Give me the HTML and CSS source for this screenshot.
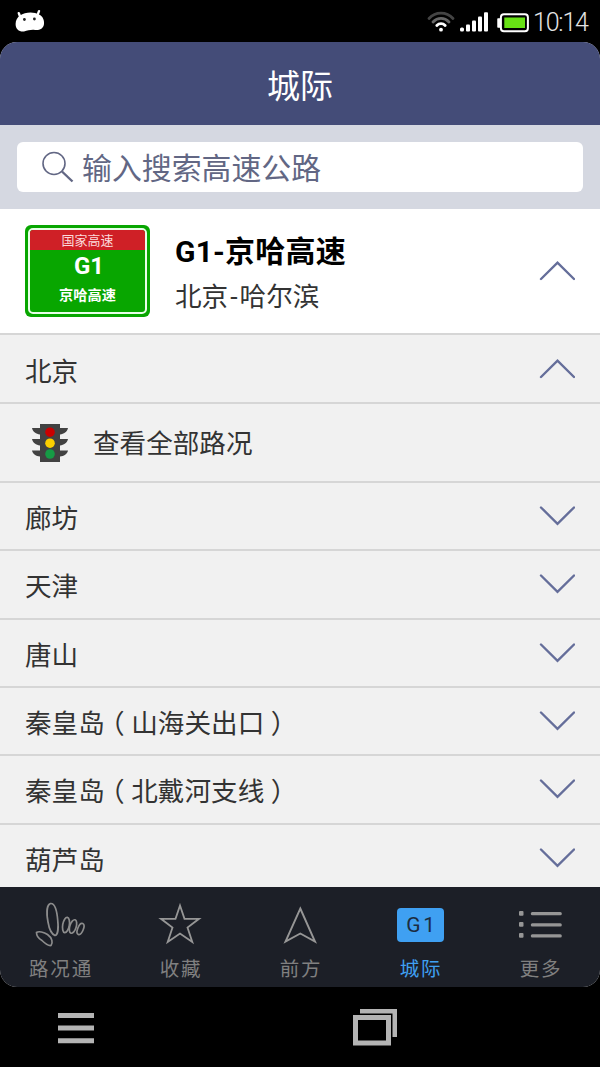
FILE: index.html
```html
<!DOCTYPE html>
<html lang="zh-CN">
<head>
    <meta charset="UTF-8">
    <meta name="viewport" content="width=device-width, initial-scale=1.0">
    <title>城际</title>
    <link rel="stylesheet" href="styles.css">
</head>
<body>

    <div class="status">
        <svg class="status-pet" width="30" height="24" viewBox="0 0 30 24">
            <path d="M3.800 4.200l1.600 4M24 2.200l-1.500 4" stroke="#fff" stroke-width="2.400" stroke-linecap="round"/>
            <path d="M5 6.500C10 2.800 19 2.500 24 5.500C28 7 29.500 12 29 15C28.500 20 24 21.500 20 21C16 20.500 13 21.500 9 22.500C4 23 .6 20 .6 15C.6 11 2.500 8.500 5 6.500Z" fill="#fff"/>
            <circle cx="9.400" cy="10.500" r="1.400" fill="#222"/>
            <circle cx="19.400" cy="10" r="1.400" fill="#222"/>
        </svg>
        <svg class="status-wifi" width="28" height="22" viewBox="0 0 28 22" fill="none" stroke-width="2.8" stroke-linecap="round">
            <path d="M2 7.5C8.5 .2 19.5 .2 26 7.5" stroke="#444"/>
            <path d="M6 11C10.500 6.200 17.500 6.200 22 11" stroke="#666"/>
            <path d="M9.800 14.500C12.200 12 15.800 12 18.200 14.500" stroke="#fff"/>
            <circle cx="14" cy="18.700" r="1.900" fill="#fff"/>
        </svg>
        <svg class="status-signal" width="28" height="20" viewBox="0 0 28 20" fill="#fff">
            <rect x="0" y="15.500" width="4" height="4" rx="1.500"/>
            <rect x="6" y="12.500" width="4" height="7" rx="1"/>
            <rect x="12" y="8.500" width="4" height="11" rx="1"/>
            <rect x="18" y="4.500" width="4" height="15" rx="1"/>
            <rect x="24" y=".3" width="4" height="19.200" rx="1"/>
        </svg>
        <svg class="status-battery" width="32" height="20" viewBox="0 0 32 20">
            <path d="M1 6h2v8h-2z" fill="#fff" stroke="#fff" stroke-width="1.500" stroke-linejoin="round"/>
            <rect x="3.900" y="1.200" width="27" height="17" rx="3" fill="none" stroke="#fff" stroke-width="2"/>
            <rect x="7.300" y="4.500" width="20.700" height="10.500" fill="#67e114"/>
        </svg>
        <span class="status-time">10:14</span>
    </div>

    <div class="app">
        <header class="title">城际</header>

        <div class="search">
            <div class="search-box">
                <svg width="32" height="32" viewBox="0 0 32 32" fill="none" stroke="#626784">
                    <circle cx="12" cy="12.500" r="11" stroke-width="1.600"/>
                    <path d="M20 20.500L30.500 30.500" stroke-width="2.400"/>
                </svg>
                <span>输入搜索高速公路</span>
            </div>
        </div>

        <div class="road">
            <div class="sign">
                <div class="sign-inner">
                    <div class="sign-top">国家高速</div>
                    <div class="sign-code">G1</div>
                    <div class="sign-name">京哈高速</div>
                </div>
            </div>
            <div class="road-text">
                <div class="road-name">G1-京哈高速</div>
                <div class="road-route">北京<span class="dash">-</span>哈尔滨</div>
            </div>
            <svg class="arrow" width="36" height="20" viewBox="0 0 36 20"><path d="M2 18L18.500 1.700L35 18"/></svg>
        </div>

        <div class="list">
            <div class="row first">
                <span>北京</span>
                <svg class="arrow" width="36" height="20" viewBox="0 0 36 20"><path d="M2 18L18.500 1.700L35 18"/></svg>
            </div>
            <div class="row all">
                <svg width="36" height="38" viewBox="0 0 36 38">
                    <path d="M0 4H8V0H28V4H36C35 8 32 10 28 10.500V15H36C35 19 32 21 28 21.500V26.500H36C35 30.500 32 32 28 32.500V38H8V32.500C4 32 1 30.500 0 26.500H8V21.500C4 21 1 19 0 15H8V10.500C4 10 1 8 0 4Z" fill="#424242"/>
                    <circle cx="18" cy="8.200" r="4.800" fill="#c90000"/>
                    <circle cx="18" cy="19.200" r="4.800" fill="#fccf00"/>
                    <circle cx="18" cy="30" r="4.800" fill="#169b45"/>
                </svg>
                <span>查看全部路况</span>
            </div>
            <div class="row">
                <span>廊坊</span>
                <svg class="arrow" width="36" height="20" viewBox="0 0 36 20"><path d="M2 1.500L18.500 17.800L35 1.500"/></svg>
            </div>
            <div class="row">
                <span>天津</span>
                <svg class="arrow" width="36" height="20" viewBox="0 0 36 20"><path d="M2 1.500L18.500 17.800L35 1.500"/></svg>
            </div>
            <div class="row">
                <span>唐山</span>
                <svg class="arrow" width="36" height="20" viewBox="0 0 36 20"><path d="M2 1.500L18.500 17.800L35 1.500"/></svg>
            </div>
            <div class="row">
                <span>秦皇岛<span class="paren">（</span>山海关出口<span class="paren">）</span></span>
                <svg class="arrow" width="36" height="20" viewBox="0 0 36 20"><path d="M2 1.500L18.500 17.800L35 1.500"/></svg>
            </div>
            <div class="row">
                <span>秦皇岛<span class="paren">（</span>北戴河支线<span class="paren">）</span></span>
                <svg class="arrow" width="36" height="20" viewBox="0 0 36 20"><path d="M2 1.500L18.500 17.800L35 1.500"/></svg>
            </div>
            <div class="row">
                <span>葫芦岛</span>
                <svg class="arrow" width="36" height="20" viewBox="0 0 36 20"><path d="M2 1.500L18.500 17.800L35 1.500"/></svg>
            </div>
        </div>

        <nav class="tabs">
            <div class="tab">
                <svg width="50" height="46" viewBox="0 0 50 46" fill="none" stroke="#8c8c8c" stroke-width="1.700">
                    <path d="M15.500 1.500C11.500 3 11.500 12 13 20C14 26 16.500 32 20 33.500C23 33 23.500 25 22.700 18C22 9 20 1 15.500 1.500Z"/>
                    <path d="M1.500 30.500C3.500 29 9 30 12.500 32.500C17.500 36 18 41 16 43.500C13 44 9.500 41 7 38.500C3.500 36.500 1.500 33.500 1.500 30.500Z"/>
                    <ellipse cx="31" cy="23" rx="3.300" ry="7.800" transform="rotate(10 31 23)"/>
                    <ellipse cx="38" cy="24.500" rx="3.200" ry="7" transform="rotate(17 38 24.500)"/>
                    <ellipse cx="45.500" cy="27" rx="2.800" ry="5.900" transform="rotate(22 45.500 27)"/>
                </svg>
                <span>路况通</span>
            </div>
            <div class="tab">
                <svg width="44" height="46" viewBox="0 0 44 46" fill="none" stroke="#969696" stroke-width="1.800">
                    <path d="M22 3.500L26.500 16.800H41L29.500 25.500L34.300 40L22 31.500L9.700 40L14.500 25.500L3 16.800H17.500Z"/>
                </svg>
                <span>收藏</span>
            </div>
            <div class="tab">
                <svg width="44" height="46" viewBox="0 0 44 46" fill="none" stroke="#969696" stroke-width="1.900">
                    <path d="M22.300 6.500L37 39.500L22.300 31.500L7.500 39.500Z"/>
                </svg>
                <span>前方</span>
            </div>
            <div class="tab active">
                <div class="tab-code">G1</div>
                <span>城际</span>
            </div>
            <div class="tab">
                <svg width="44" height="46" viewBox="0 0 44 46" fill="#969696">
                    <rect x="1" y="9" width="4.500" height="4.800" rx="1"/>
                    <rect x="1" y="20" width="4.500" height="4.800" rx="1"/>
                    <rect x="1" y="31" width="4.500" height="4.800" rx="1"/>
                    <rect x="12.800" y="10" width="31" height="3.200" rx="1.500"/>
                    <rect x="12.800" y="21.200" width="31" height="3.200" rx="1.500"/>
                    <rect x="12.800" y="32.300" width="31" height="3.200" rx="1.500"/>
                </svg>
                <span>更多</span>
            </div>
        </nav>
    </div>

    <div class="keys">
        <svg class="key-menu" width="36" height="31" viewBox="0 0 36 31" fill="#b4b4b4">
            <path d="M0 0h36v5h-36zM0 12.500h36v5h-36zM0 25.300h36v5h-36z"/>
        </svg>
        <svg width="44" height="37" viewBox="0 0 44 37" fill="#b4b4b4">
            <path d="M7 0H44V28H39.500V4.500H7Z"/>
            <path d="M0 6H38V36.500H0ZM5 11V31.500H33V11Z" fill-rule="evenodd"/>
        </svg>
    </div>

</body>
</html>
```
FILE: styles.css
```css
* {
    box-sizing: border-box;
}

body {
    margin: 0;
    width: 600px;
    height: 1067px;
    overflow: hidden;
    background: #000;
    color: #333;
    font-family: Roboto, "Noto Sans CJK SC", sans-serif;
    display: flex;
    flex-direction: column;
}

svg {
    display: block;
    flex: none;
}

/* Barra de status */
.status {
    height: 42px;
    flex: none;
    display: flex;
    align-items: flex-start;
    padding: 0 10px 0 15px;
}

.status-pet {
    margin: 9px auto 0 0;
}

.status-wifi {
    margin: 11px 5px 0 0;
}

.status-signal {
    margin: 12px 9px 0 0;
}

.status-battery {
    margin: 12.500px 4px 0 0;
}

.status-time {
    width: 57px;
    color: #e4e4e4;
    font-size: 25px;
    font-weight: 300;
    letter-spacing: -1.200px;
    line-height: 45px;
    white-space: nowrap;
}

/* App */
.app {
    height: 945px;
    flex: none;
    display: flex;
    flex-direction: column;
    overflow: hidden;
    border-radius: 17px;
    background: #f1f1f1;
}

.title {
    height: 83px;
    flex: none;
    background: #444c78;
    color: #fff;
    font-size: 33px;
    line-height: 90px;
    text-align: center;
}

.search {
    height: 84px;
    flex: none;
    padding: 17px;
    background: #d5d8e1;
}

.search-box {
    height: 50px;
    display: flex;
    align-items: center;
    gap: 8px;
    padding-left: 25px;
    border-radius: 6px;
    background: #fff;
    color: #626784;
    font-size: 29.900px;
    line-height: 50px;
}

.search-box span {
    padding-top: 4px;
}

.road {
    height: 126px;
    flex: none;
    display: flex;
    padding: 16px 25px 0;
    background: #fff;
    border-bottom: 2px solid #d6d6d6;
}

.sign {
    width: 125px;
    height: 92px;
    padding: 3px;
    border-radius: 6px;
    background: #08a600;
    color: #fff;
    text-align: center;
}

.sign-inner {
    height: 86px;
    overflow: hidden;
    border: 2px solid #e8ffe8;
    border-radius: 5px;
}

.sign-top {
    height: 20px;
    background: #cf2026;
    color: #fbd9da;
    font-size: 13px;
    line-height: 21px;
}

.sign-code {
    height: 30px;
    padding-left: 3px;
    font-size: 24px;
    font-weight: 700;
    line-height: 32px;
}

.sign-name {
    font-size: 14.200px;
    font-weight: 700;
    line-height: 30px;
}

.road-text {
    flex: 1;
    padding-left: 25px;
}

.road-name {
    height: 50px;
    color: #000;
    font-size: 30px;
    font-weight: 700;
    letter-spacing: .200px;
    line-height: 54px;
}

.road-route {
    font-size: 26.600px;
    line-height: 44px;
}

.dash {
    margin: 0 2px;
}

.arrow {
    fill: none;
    stroke: #656e9a;
    stroke-width: 2.400;
    stroke-linecap: round;
}

.road .arrow {
    margin-top: 36px;
}

/* Lista de cidades */
.list {
    flex: 1;
    overflow: hidden;
}

.row {
    height: 68.330px;
    display: flex;
    justify-content: space-between;
    align-items: center;
    padding: 0 25px;
    border-bottom: 2px solid #d6d6d6;
    font-size: 26.600px;
    line-height: 60px;
}

.row > span {
    padding-top: 6px;
}

.row.first {
    height: 69px;
}

.row.all {
    height: 79px;
    justify-content: flex-start;
    gap: 25px;
    padding-left: 32px;
}

.row.all > span {
    padding-top: 3px;
}

.paren {
    margin: 0 6.600px;
    font-feature-settings: "halt";
}

/* Abas */
.tabs {
    height: 100px;
    flex: none;
    display: flex;
    background: #1c1f27;
}

.tab {
    flex: 1;
    display: flex;
    flex-direction: column;
    align-items: center;
    padding-top: 15px;
    color: #808080;
    font-size: 19.500px;
    letter-spacing: 1.800px;
    line-height: 44px;
}

.tab > span {
    padding-left: 2px;
}

.active {
    color: #3fa0f2;
}

.tab-code {
    width: 47px;
    height: 34px;
    margin: 6px 0;
    padding-left: 4px;
    border-radius: 4px;
    background: #3fa0f2;
    color: #1c2c40;
    font-size: 21px;
    letter-spacing: 2.600px;
    line-height: 35px;
    text-align: center;
}

/* Teclas do sistema */
.keys {
    flex: 1;
    display: flex;
    align-items: flex-start;
    gap: 259px;
    padding: 22px 58px;
}

.key-menu {
    margin-top: 4px;
}
```
